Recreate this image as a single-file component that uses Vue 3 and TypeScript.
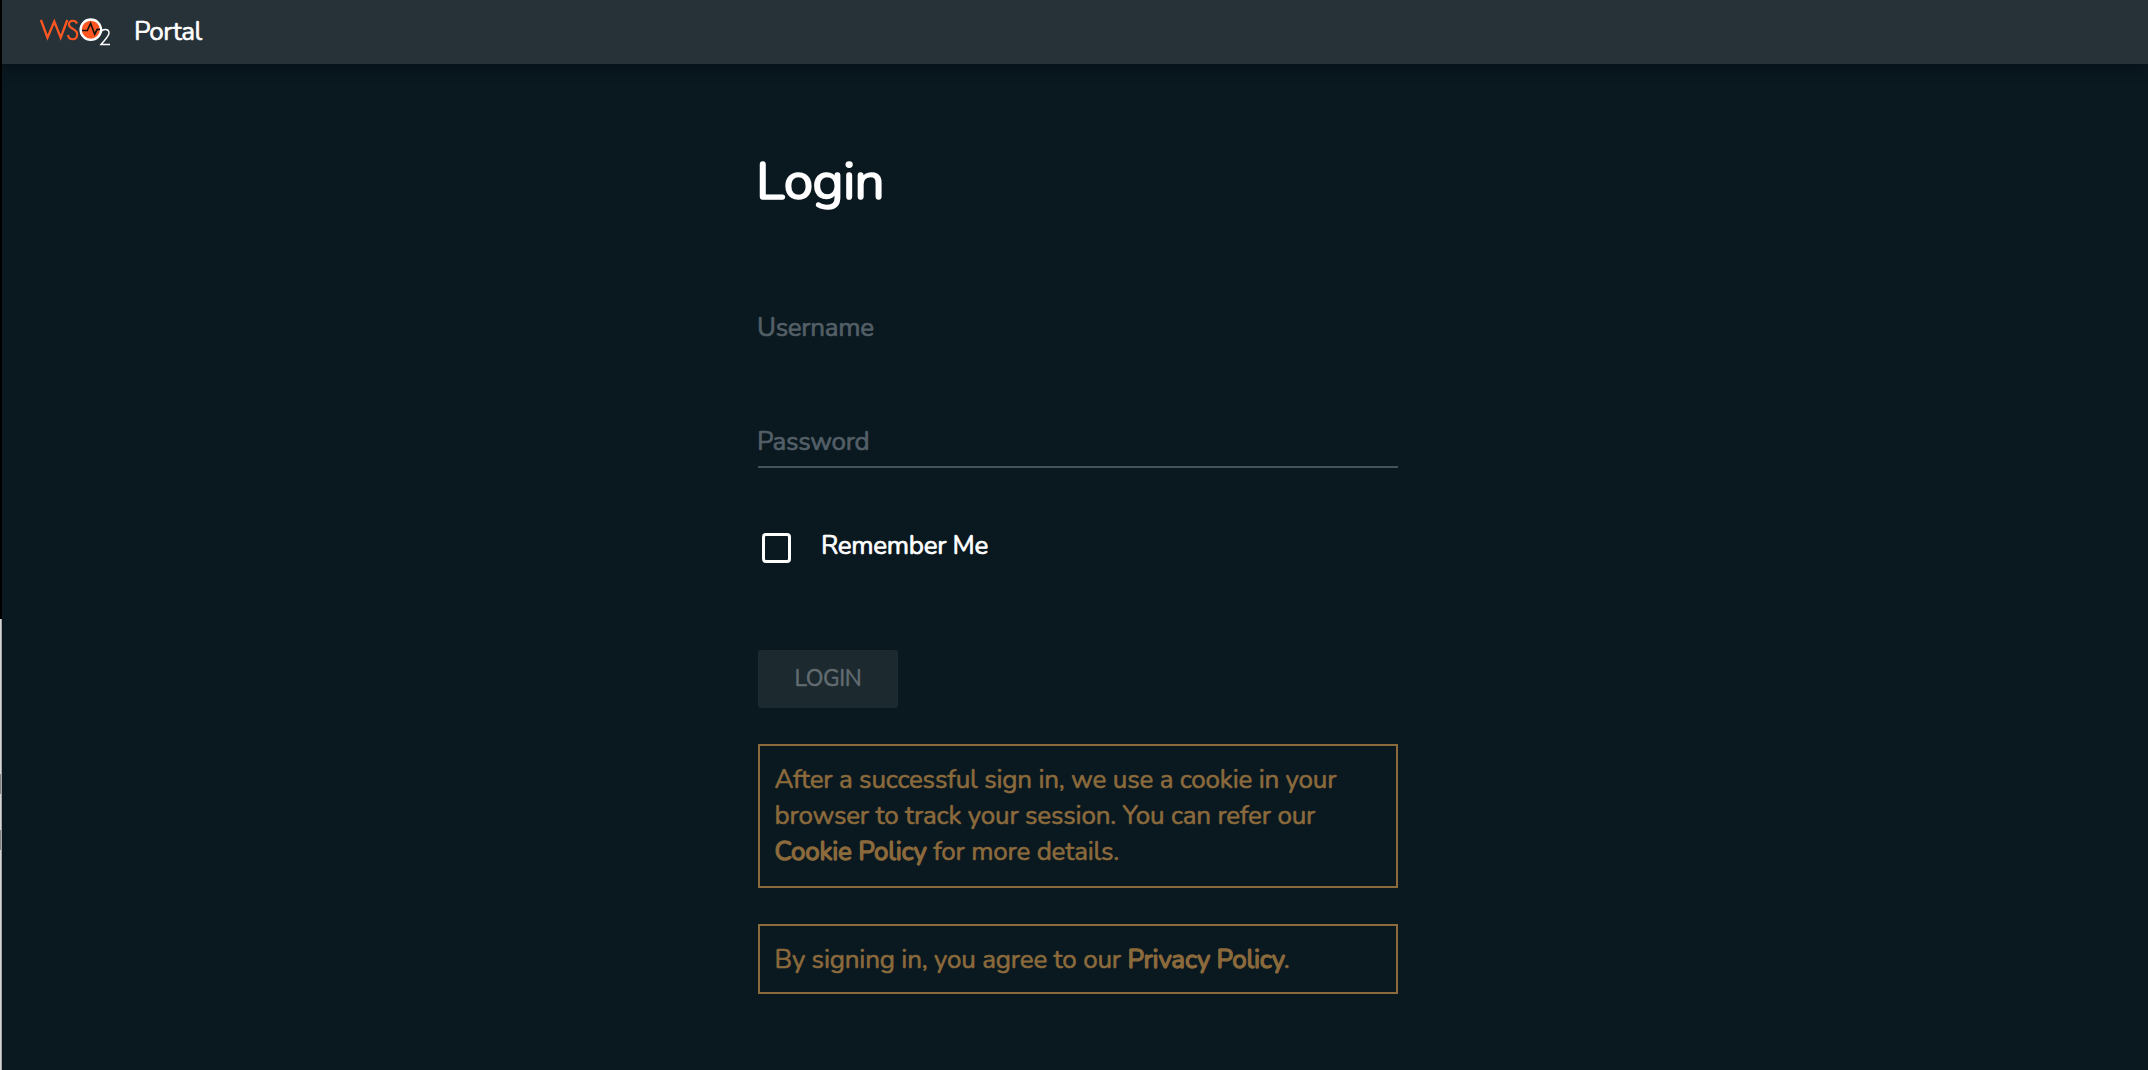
<script setup lang="ts">
import { ref } from 'vue'

const username = ref('')
const password = ref('')
const remember = ref(false)
</script>

<template>
  <div class="screen">
    <div class="edge">
      <i class="edge-dark"></i>
      <i class="edge-light"></i>
    </div>
    <div class="page">
      <header class="bar">
        <svg class="logo" width="72" height="30" viewBox="0 0 72 30" fill="none">
          <path d="M.900 3 7.500 20.600 14.300 4.500 20.700 20.600 27.300 3" stroke="#ff5722" stroke-width="2.300" />
          <path d="M37 6.500C36.200 4.500 34.800 3.700 33 3.700C30.500 3.700 28.900 5.300 28.900 7.600C28.900 12.300 37.200 11.300 37.200 17.200C37.200 20.300 35.300 22.200 32.500 22.200C30 22.200 28.400 20.600 27.900 18" stroke="#ff5722" stroke-width="2.100" />
          <circle cx="50.800" cy="12.700" r="10.200" fill="#ff5722" stroke="#fff" stroke-width="2.300" />
          <path d="M42 13.500H47.300L50.600 6.500 54.700 17.200 57.200 12.300H60" stroke="#141414" stroke-width="1.700" />
          <path d="M60.800 16.200C61.300 13.700 63 12.500 65.200 12.500C67.600 12.500 69 13.900 69 16.100C69 19.500 64.500 23 61 27.500H70" stroke="#fff" stroke-width="1.500" />
        </svg>
        <span class="brand">Portal</span>
      </header>
      <main class="form">
        <h1 class="title">Login</h1>
        <label class="field"><span>Username</span><input v-model="username" /></label>
        <label class="field underlined"><span>Password</span><input v-model="password" type="password" /></label>
        <label class="remember">
          <input v-model="remember" type="checkbox" />
          <i class="box"></i>
          <span>Remember Me</span>
        </label>
        <button class="submit" disabled>LOGIN</button>
        <p class="notice first">
          <span class="line">After a successful sign in, we use a cookie in your</span>
          <span class="line">browser to track your session. You can refer our</span>
          <span class="line"><b>Cookie Policy</b> for more details.</span>
        </p>
        <p class="notice">
          <span class="line">By signing in, you agree to our <b>Privacy Policy</b>.</span>
        </p>
      </main>
    </div>
  </div>
</template>

<style>
body {
  margin: 0;
  background: #0a1820;
}
</style>

<style scoped>
.screen {
  display: flex;
  width: 2148px;
  height: 1070px;
  overflow: hidden;
  background: #0a1820;
  font-family: Nunito, Lato, "Noto Sans", sans-serif;
  font-size: 26px;
  line-height: 36px;
  letter-spacing: -0.19px;
  color: #fff;
}
.edge {
  display: flex;
  flex-direction: column;
  width: 2px;
}
.edge-dark {
  height: 619px;
  background: #000;
}
.edge-light {
  flex: 1;
  border-right: 1px solid #a5a5a5;
  background: linear-gradient(#d5d5d5 0 155px, #858585 155px 175px, #d5d5d5 175px 211px, #858585 211px 231px, #d5d5d5 231px);
}
.page {
  flex: 1;
  display: flex;
  flex-direction: column;
}
.bar {
  box-sizing: border-box;
  display: flex;
  align-items: flex-start;
  height: 64px;
  padding: 17px 0 0 38px;
  background: #263238;
  box-shadow: 0 2px 16px rgba(0, 0, 0, 0.4);
}
.logo {
  display: block;
  flex: none;
}
.brand {
  margin: -3px 0 0 22px;
  letter-spacing: -0.55px;
  -webkit-text-stroke: 0.6px currentColor;
}
.form {
  display: flex;
  flex-direction: column;
  width: 640px;
  margin-left: 756px;
}
.title {
  margin: 84px 0 0 -2px;
  height: 68px;
  font-size: 53px;
  line-height: 68px;
  font-weight: 400;
  letter-spacing: -0.7px;
  -webkit-text-stroke: 1.6px currentColor;
}
.field {
  display: flex;
  flex-direction: column;
  box-sizing: border-box;
  height: 113px;
  margin-top: 94px;
  color: #535f66;
}
.field span {
  margin-left: -1px;
  letter-spacing: -0.3px;
  -webkit-text-stroke: 0.7px currentColor;
}
.field input {
  width: 100%;
  height: 10px;
  padding: 0;
  border: 0;
  outline: 0;
  background: none;
  color: #fff;
}
.underlined {
  height: 45px;
  margin-top: 1px;
}
.underlined span {
  height: 42px;
}
.underlined input {
  height: 2px;
  background: #465259;
}
.remember {
  display: flex;
  align-items: flex-start;
  height: 36px;
  margin-top: 58px;
}
.remember input {
  display: none;
}
.box {
  box-sizing: border-box;
  width: 29px;
  height: 30px;
  margin: 6px 30px 0 4px;
  border: 3px solid #fff;
  border-radius: 4px;
}
.remember span {
  margin-top: 1px;
  letter-spacing: -0.3px;
  -webkit-text-stroke: 0.7px currentColor;
}
.submit {
  width: 140px;
  height: 58px;
  margin: 87px 0 36px;
  padding: 0;
  border: 0;
  border-radius: 3px;
  background: #1c292f;
  color: #626c71;
  font: 23px/56px Nunito, Lato, sans-serif;
  letter-spacing: -0.4px;
  -webkit-text-stroke: 0.5px currentColor;
}
.notice {
  box-sizing: border-box;
  height: 70px;
  margin: 0;
  padding: 16px 14.500px;
  border: 2px solid #8b6a3c;
  color: #8b6a3c;
  white-space: nowrap;
}
.first {
  height: 144px;
  margin-bottom: 36px;
}
.line {
  display: block;
  -webkit-text-stroke: 0.6px currentColor;
}
.line b {
  font-weight: 400;
  -webkit-text-stroke: 1.3px currentColor;
}
</style>
